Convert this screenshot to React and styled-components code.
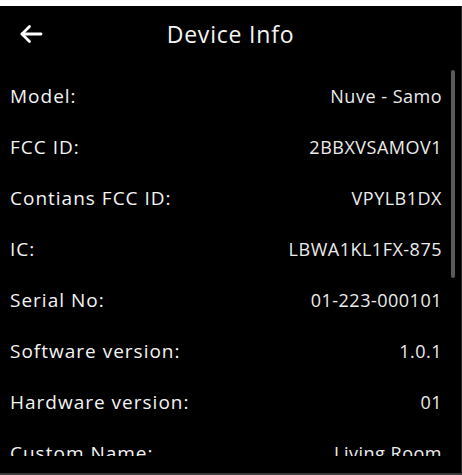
import React from 'react'
import styled, { createGlobalStyle } from 'styled-components'

const GlobalStyle = createGlobalStyle`
  html, body {
    margin: 0;
    padding: 0;
    background: #ffffff;
  }
  * {
    box-sizing: border-box;
  }
`

const Screen = styled.div`
  margin-top: 6px;
  width: 462px;
  height: 469px;
  background: #000;
  border-right: 1px solid #2a2a2a;
  display: flex;
  flex-direction: column;
  font-family: "Open Sans", "Noto Sans", sans-serif;
  color: #f4f4f4;
  overflow: hidden;
`

const Header = styled.div`
  height: 56px;
  flex-shrink: 0;
  display: grid;
  grid-template-columns: 60px 1fr 60px;
  align-items: center;
`

const BackButton = styled.button`
  background: none;
  border: none;
  padding: 0 0 0 19px;
  height: 100%;
  display: flex;
  align-items: center;
  cursor: pointer;
  color: #fff;
`

const Title = styled.h1`
  margin: 0;
  text-align: center;
  font-size: 23px;
  font-weight: 400;
  letter-spacing: 0.8px;
`

const ListBox = styled.div`
  position: relative;
  margin-top: 8px;
  height: 386px;
  flex-shrink: 0;
  overflow: hidden;
`

const ScrollThumb = styled.div`
  position: absolute;
  top: 0;
  right: 6px;
  width: 4px;
  height: 208px;
  border-radius: 2px;
  background: #5a5a5a;
`

const Row = styled.div`
  height: 51px;
  display: flex;
  align-items: center;
  justify-content: space-between;
  padding: 0 19px 0 10px;
`

const Label = styled.span`
  font-size: 19px;
  letter-spacing: 1px;
`

const Value = styled.span`
  font-size: 18px;
  letter-spacing: 0.5px;
  color: #ececec;
`

const Footer = styled.div`
  flex: 1;
  border-bottom: 2px solid #3a3a3a;
`

const BackArrow = () => (
  <svg width="24" height="20" viewBox="0 0 24 20" fill="none" stroke="currentColor" strokeWidth="2.8" strokeLinecap="round" strokeLinejoin="round">
    <path d="M22 10H3" />
    <path d="M10.5 2.5L3 10l7.5 7.5" />
  </svg>
)

const info = [
  ['Model:', 'Nuve - Samo'],
  ['FCC ID:', '2BBXVSAMOV1'],
  ['Contians FCC ID:', 'VPYLB1DX'],
  ['IC:', 'LBWA1KL1FX-875'],
  ['Serial No:', '01-223-000101'],
  ['Software version:', '1.0.1'],
  ['Hardware version:', '01'],
  ['Custom Name:', 'Living Room'],
]

const App = () => {
  return (
    <>
      <GlobalStyle />
      <Screen>
        <Header>
          <BackButton aria-label="Back">
            <BackArrow />
          </BackButton>
          <Title>Device Info</Title>
          <div />
        </Header>
        <ListBox>
          {info.map(([label, value]) => (
            <Row key={label}>
              <Label>{label}</Label>
              <Value>{value}</Value>
            </Row>
          ))}
          <ScrollThumb />
        </ListBox>
        <Footer />
      </Screen>
    </>
  )
}

export default App
